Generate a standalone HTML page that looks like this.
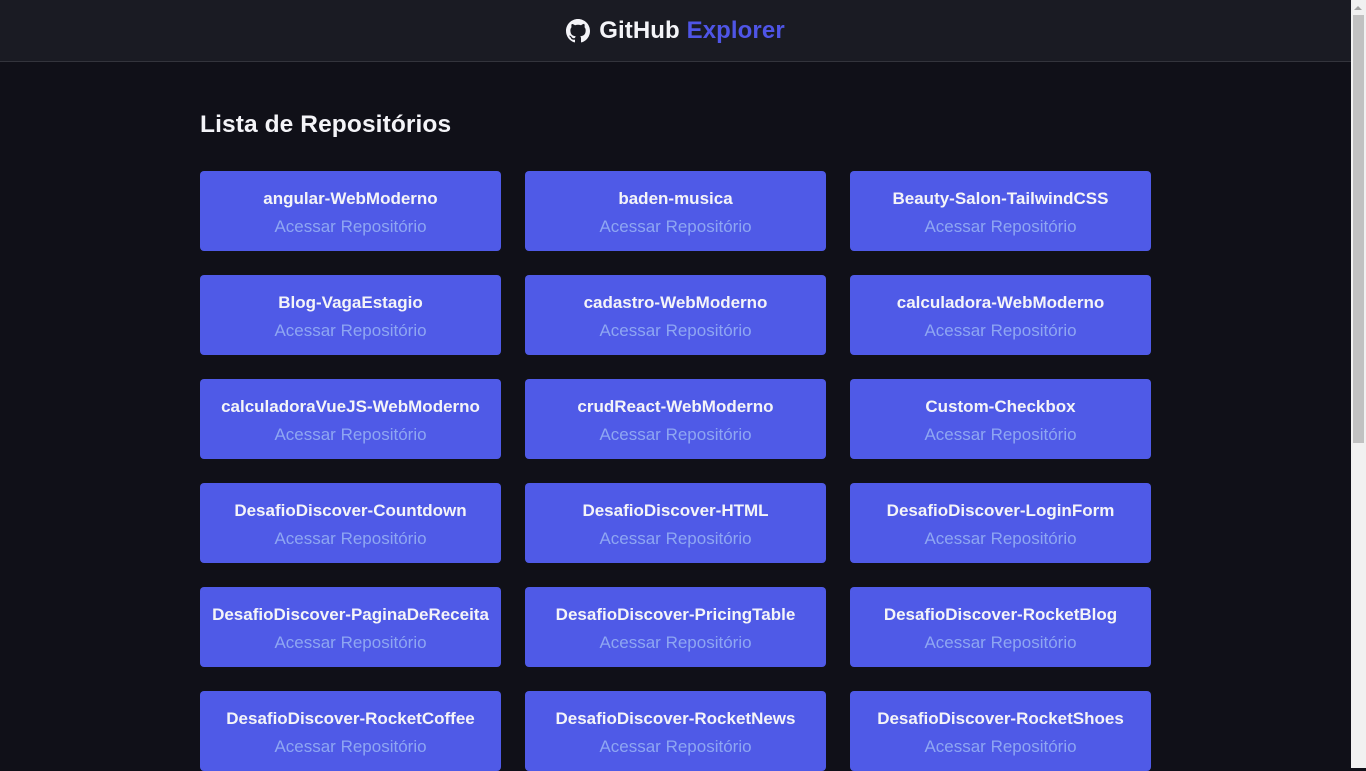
<!DOCTYPE html>
<html><head><meta charset="utf-8"><style>
*{margin:0;padding:0;box-sizing:border-box}
html,body{width:1366px;height:768px;overflow:hidden;background:#101018;font-family:"Liberation Sans",sans-serif}
header{position:absolute;left:0;top:0;width:1351px;height:62px;background:#1a1b23;border-bottom:1px solid #33343c;display:flex;align-items:center;justify-content:center;gap:9px}
header .t{font-size:24px;font-weight:bold;color:#f4f4f8;letter-spacing:0.1px;margin-top:1px}
header .t span{color:#4f55e6}
h1{position:absolute;left:200px;top:111px;font-size:24.5px;font-weight:bold;color:#f4f4f8;letter-spacing:0.1px}
.grid{position:absolute;left:200px;top:171px;width:951px;display:grid;grid-template-columns:301px 301px 301px;column-gap:24px;row-gap:24px}
.c{height:80px;background:#4f5ae7;border-radius:4px;text-align:center;padding-top:17px}
.c b{display:block;color:#f4f4f8;font-size:17px;height:24px;margin-top:1px}
.c a{display:block;color:#8ea6f2;font-size:17px;margin-top:4px}
.sb{position:absolute;left:1351px;top:0;width:15px;height:768px;background:#f1f1f1}
.th{position:absolute;left:1353px;top:15px;width:11px;height:428px;background:#c1c1c1}
.ar{position:absolute;left:1354px;top:6px;width:0;height:0;border-left:4px solid transparent;border-right:4px solid transparent;border-bottom:4px solid #a3a3a3}
</style></head><body>
<header>
<svg width="24" height="24" viewBox="0 0 16 16"><path fill="#f4f4f8" d="M8 0C3.58 0 0 3.58 0 8c0 3.54 2.290 6.530 5.470 7.590.4.07.55-.17.55-.38 0-.19-.01-.82-.01-1.49-2.010.37-2.530-.49-2.690-.94-.09-.23-.48-.94-.82-1.130-.28-.15-.68-.52-.01-.53.63-.01 1.080.58 1.230.82.72 1.210 1.870.87 2.330.66.07-.52.28-.87.51-1.070-1.780-.2-3.640-.89-3.640-3.950 0-.87.31-1.590.82-2.150-.08-.2-.36-1.020.08-2.120 0 0 .67-.21 2.200.82.64-.18 1.320-.27 2-.27.68 0 1.360.09 2 .27 1.530-1.040 2.200-.82 2.200-.82.44 1.100.16 1.920.08 2.120.51.56.82 1.270.82 2.150 0 3.070-1.870 3.750-3.650 3.950.29.25.54.73.54 1.480 0 1.070-.01 1.930-.01 2.200 0 .21.15.46.55.38A8.013 8.013 0 0016 8c0-4.420-3.580-8-8-8z"/></svg>
<div class="t">GitHub <span>Explorer</span></div>
</header>
<h1>Lista de Repositórios</h1>
<div class="grid">
<div class="c"><b>angular-WebModerno</b><a>Acessar Repositório</a></div>
<div class="c"><b>baden-musica</b><a>Acessar Repositório</a></div>
<div class="c"><b>Beauty-Salon-TailwindCSS</b><a>Acessar Repositório</a></div>
<div class="c"><b>Blog-VagaEstagio</b><a>Acessar Repositório</a></div>
<div class="c"><b>cadastro-WebModerno</b><a>Acessar Repositório</a></div>
<div class="c"><b>calculadora-WebModerno</b><a>Acessar Repositório</a></div>
<div class="c"><b>calculadoraVueJS-WebModerno</b><a>Acessar Repositório</a></div>
<div class="c"><b>crudReact-WebModerno</b><a>Acessar Repositório</a></div>
<div class="c"><b>Custom-Checkbox</b><a>Acessar Repositório</a></div>
<div class="c"><b>DesafioDiscover-Countdown</b><a>Acessar Repositório</a></div>
<div class="c"><b>DesafioDiscover-HTML</b><a>Acessar Repositório</a></div>
<div class="c"><b>DesafioDiscover-LoginForm</b><a>Acessar Repositório</a></div>
<div class="c"><b>DesafioDiscover-PaginaDeReceita</b><a>Acessar Repositório</a></div>
<div class="c"><b>DesafioDiscover-PricingTable</b><a>Acessar Repositório</a></div>
<div class="c"><b>DesafioDiscover-RocketBlog</b><a>Acessar Repositório</a></div>
<div class="c"><b>DesafioDiscover-RocketCoffee</b><a>Acessar Repositório</a></div>
<div class="c"><b>DesafioDiscover-RocketNews</b><a>Acessar Repositório</a></div>
<div class="c"><b>DesafioDiscover-RocketShoes</b><a>Acessar Repositório</a></div>
</div>
<div class="sb"></div><div class="th"></div><div class="ar"></div>
</body></html>
